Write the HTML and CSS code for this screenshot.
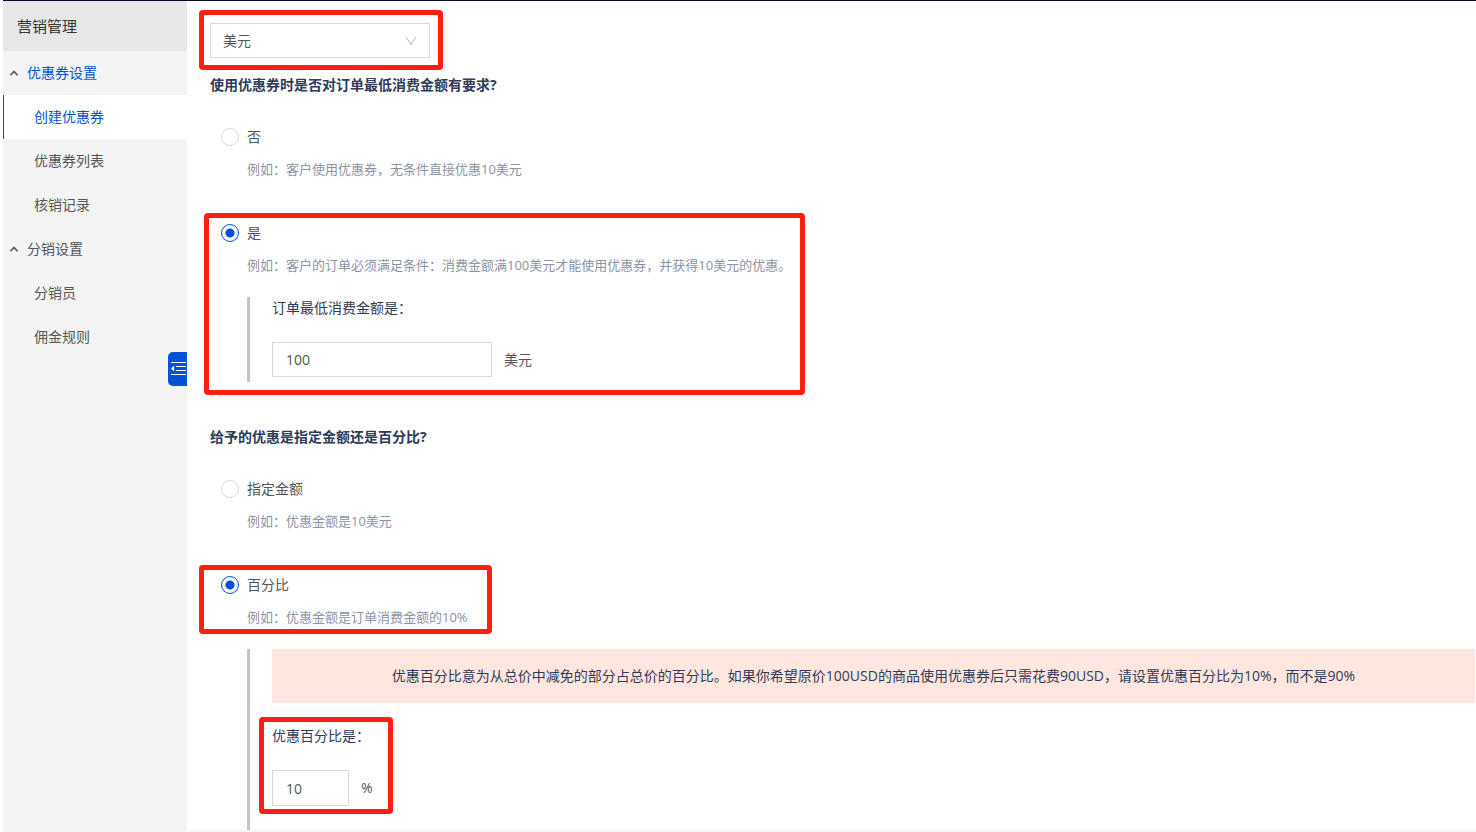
FILE: index.html
```html
<!DOCTYPE html>
<html lang="zh-CN">
<head>
    <meta charset="UTF-8">
    <meta name="viewport" content="width=device-width, initial-scale=1.0">
    <title>营销管理</title>
    <link rel="stylesheet" href="styles.css">
</head>
<body>
    <div class="layout">
        <aside class="sidebar">
            <div class="sidebar-title">营销管理</div>
            <nav>
                <a href="#" class="menu-group open">
                    <svg class="arrow" viewBox="0 0 10 8"><path d="M1.5 6.2 5 2.4l3.500 3.800"/></svg>
                    优惠券设置
                </a>
                <a href="#" class="menu-item active">创建优惠券</a>
                <a href="#" class="menu-item">优惠券列表</a>
                <a href="#" class="menu-item">核销记录</a>
                <a href="#" class="menu-group">
                    <svg class="arrow" viewBox="0 0 10 8"><path d="M1.5 6.2 5 2.4l3.500 3.800"/></svg>
                    分销设置
                </a>
                <a href="#" class="menu-item">分销员</a>
                <a href="#" class="menu-item">佣金规则</a>
            </nav>
            <button type="button" class="collapse-button" aria-label="收起菜单">
                <svg viewBox="0 0 16 16">
                    <path class="lines" d="M0 1.500h15M5 5.500h10M5 9.500h10M0 13.500h15"/>
                    <path class="tip" d="M3.200 4.500v6L0 7.500z"/>
                </svg>
            </button>
        </aside>

        <main class="content">
            <form class="coupon-form">
                <div class="select-box marked mark-select">
                    <select class="currency" aria-label="币种">
                        <option>美元</option>
                    </select>
                    <svg class="chevron" viewBox="0 0 12 10"><path d="M1 1l5 7.500L11 1"/></svg>
                </div>

                <h2 class="question">使用优惠券时是否对订单最低消费金额有要求?</h2>
                <div class="option">
                    <label class="radio"><input type="radio" name="minimum">否</label>
                    <p class="hint">例如：客户使用优惠券，无条件直接优惠10美元</p>
                </div>
                <div class="option marked mark-minimum">
                    <label class="radio"><input type="radio" name="minimum" checked>是</label>
                    <p class="hint">例如：客户的订单必须满足条件：消费金额满100美元才能使用优惠券，并获得10美元的优惠。</p>
                    <div class="detail">
                        <label class="field-label" for="minAmount">订单最低消费金额是：</label>
                        <div class="field">
                            <input type="text" id="minAmount" class="text-input" value="100">
                            <span>美元</span>
                        </div>
                    </div>
                </div>

                <h2 class="question">给予的优惠是指定金额还是百分比?</h2>
                <div class="option">
                    <label class="radio"><input type="radio" name="discount">指定金额</label>
                    <p class="hint">例如：优惠金额是10美元</p>
                </div>
                <div class="option marked mark-percent">
                    <label class="radio"><input type="radio" name="discount" checked>百分比</label>
                    <p class="hint">例如：优惠金额是订单消费金额的10%</p>
                </div>
                <div class="detail detail-percent">
                    <div class="notice">优惠百分比意为从总价中减免的部分占总价的百分比。如果你希望原价100USD的商品使用优惠券后只需花费90USD，请设置优惠百分比为10%，而不是90%</div>
                    <div class="percent-group marked mark-value">
                        <label class="field-label" for="percent">优惠百分比是：</label>
                        <div class="field">
                            <input type="text" id="percent" class="text-input short" value="10">
                            <span>%</span>
                        </div>
                    </div>
                </div>
            </form>
            <div class="content-end"></div>
        </main>
    </div>
</body>
</html>
```

FILE: styles.css
```css
* { box-sizing: border-box; }
body {
    margin: 0;
    padding-left: 3px;
    background: #fff;
    color: #555;
    font-family: "Open Sans", "Noto Sans CJK SC", sans-serif;
    font-size: 14px;
    line-height: 22px;
}
.layout {
    display: flex;
    min-height: 100vh;
    border-top: 1px solid #000b30;
}

/* sidebar */
.sidebar {
    position: relative;
    flex: 0 0 184px;
    background: #f4f4f4;
}
.sidebar-title {
    padding: 0 14px;
    background: #e7e7e7;
    color: #333;
    font-size: 15px;
    line-height: 50px;
}
.menu-group, .menu-item {
    display: flex;
    align-items: center;
    height: 44px;
    color: #555;
    text-decoration: none;
}
.menu-group { padding-left: 6px; gap: 8px; }
.menu-group.open { color: #0052d9; }
.menu-item { padding-left: 30px; border-left: 1px solid transparent; }
.menu-item.active {
    background: #fff;
    border-left-color: #0a4bb5;
    color: #0052d9;
}
.arrow { width: 10px; height: 8px; fill: none; stroke: #555; stroke-width: 1.6; }
.collapse-button {
    position: absolute;
    top: 351px;
    right: 0;
    display: flex;
    align-items: center;
    width: 19px;
    height: 34px;
    padding: 0 0 0 3px;
    border: none;
    border-radius: 5px 0 0 5px;
    background: #0052d9;
    cursor: pointer;
}
.collapse-button svg { width: 16px; height: 16px; }
.collapse-button .lines { fill: none; stroke: #fff; stroke-width: 1; }
.collapse-button .tip { fill: #fff; }

/* form */
.content {
    display: flex;
    flex: 1;
    flex-direction: column;
    min-width: 0;
}
.coupon-form { padding: 22px 1px 0 23px; }
.content-end { flex: 1; margin-left: 1px; background: #f6f6f6; }
.select-box { width: 220px; }
.currency {
    display: block;
    appearance: none;
    width: 100%;
    height: 35px;
    padding: 0 12px;
    border: 1px solid #d9d9d9;
    border-radius: 0;
    background: #fff;
    color: #555;
    font: inherit;
}
.chevron {
    position: absolute;
    top: 13px;
    right: 13px;
    width: 12px;
    height: 10px;
    fill: none;
    stroke: #b5b5b5;
    pointer-events: none;
}
.question {
    margin: 16px 0 30px;
    color: #2e3b59;
    font-size: 14px;
    font-weight: bold;
    line-height: 22px;
}
.option { width: fit-content; margin-bottom: 43px; }
.radio {
    display: flex;
    align-items: center;
    gap: 8px;
    padding-left: 11px;
}
.radio input {
    appearance: none;
    width: 18px;
    height: 18px;
    margin: 0;
    border: 1px solid #d9d9d9;
    border-radius: 50%;
    background: #fff;
}
.radio input:checked {
    border-color: #0052d9;
    background: radial-gradient(circle, #0052d9 4px, #fff 5px);
}
.hint {
    margin: 11px 0 0 37px;
    color: #8c93a5;
    font-size: 13px;
    line-height: 20px;
}
.detail {
    margin: 22px 0 0 37px;
    padding: 0 0 5px 22px;
    border-left: 3px solid #c1c5cf;
}
.detail-percent { padding-bottom: 24px; }
.field-label { display: block; margin-bottom: 23px; color: #2e3b59; }
.field { display: flex; align-items: center; gap: 12px; }
.text-input {
    width: 220px;
    height: 35px;
    padding: 0 13px;
    border: 1px solid #d9d9d9;
    border-radius: 0;
    color: #555;
    font: inherit;
}
.text-input.short { width: 77px; height: 36px; }
.notice {
    margin-bottom: 22px;
    padding: 16px;
    background: #ffe6df;
    color: #2e3b59;
    text-align: center;
}
.percent-group { width: fit-content; }

/* red frames around the settings to fill in */
.marked { position: relative; }
.marked::after {
    content: "";
    position: absolute;
    border: 5px solid #ff1e12;
    border-radius: 4px;
    pointer-events: none;
}
.mark-select::after { inset: -13px -13px -12px -11px; }
.mark-minimum { margin-bottom: 44px; }
.mark-minimum::after { inset: -9px -14px -13px -6px; }
.mark-percent { margin-bottom: 0; }
.mark-percent::after { inset: -9px -24px -7px -11px; }
.mark-value::after { inset: -8px -20px -8px -13px; }
```
